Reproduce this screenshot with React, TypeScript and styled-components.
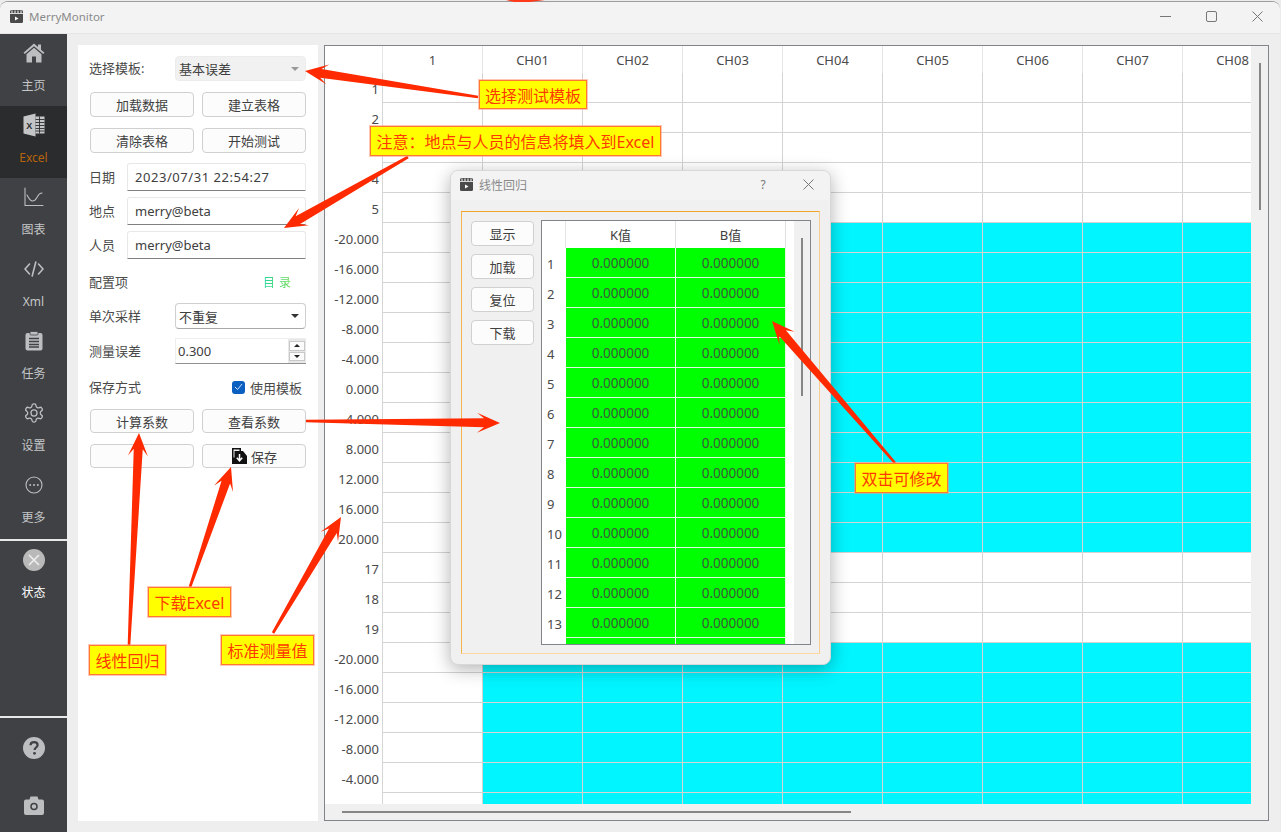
import React from "react";
import styled, { createGlobalStyle } from "styled-components";

const Global = createGlobalStyle`
  html, body { margin: 0; padding: 0; background: #ececec; overflow: hidden; }
  * { box-sizing: border-box; }
`;

const FONT = `"Noto Sans", "Noto Sans CJK SC", sans-serif`;

const Page = styled.div`
  position: relative; width: 1281px; height: 832px; overflow: hidden;
  font-family: ${FONT}; font-size: 13px; color: #404040; padding-top: 1px;
`;
const Win = styled.div`
  width: 1280px; height: 831px; background: #eeeeee; display: flex; flex-direction: column;
  border-top: 1px solid #9c9c9c; border-radius: 8px 8px 0 0; overflow: hidden;
`;
const TitleBar = styled.div`
  height: 32px; flex: none; background: #f3f3f3; border-bottom: 1px solid #e6e6e6;
  display: flex; align-items: center; padding: 0 0 2px 10px; color: #8a8a8a; font-size: 11.5px;
`;
const TitleText = styled.span` flex: 1; margin-left: 6px; `;
const WinBtn = styled.span<{ $w?: number }>`
  width: ${p => p.$w ?? 46}px; height: 28px; flex: none; display: flex; align-items: center; justify-content: center; color: #777;
`;
const Body = styled.div` flex: 1; display: flex; min-height: 0; `;
const Side = styled.nav`
  width: 67px; flex: none; background: #404144; display: flex; flex-direction: column;
`;
const SideItem = styled.div<{ $active?: boolean; $status?: boolean }>`
  height: 72px; flex: none; display: flex; flex-direction: column; align-items: center; justify-content: flex-start;
  padding-top: 8px; gap: 14px; font-size: 12px; line-height: 16px;
  background: ${p => (p.$active ? "#2b2c2e" : "transparent")};
  color: ${p => (p.$active ? "#b8640c" : p.$status ? "#ffffff" : "#c4c6c8")};
`;
const IconBox = styled.span`
  width: 24px; height: 22px; display: flex; align-items: center; justify-content: center; color: #bcbec0;
`;
const SideRule = styled.div<{ $top?: number }>`
  height: 2px; flex: none; background: #e8e8e8; margin-top: ${p => p.$top ?? 0}px;
`;
const Spacer = styled.div` flex: 1; `;
const SideIconOnly = styled.div<{ $h: number }>`
  height: ${p => p.$h}px; flex: none; display: flex; align-items: center; justify-content: center; color: #bcbec0;
`;
const Main = styled.div`
  flex: 1; display: flex; padding: 11px 12px 11px 11px; gap: 6px; min-width: 0;
`;
const Panel = styled.section`
  width: 240px; flex: none; background: #fff; padding: 11px 12px 0 11px; display: flex; flex-direction: column;
`;
const Row = styled.div<{ $top?: number; $h?: number }>`
  display: flex; align-items: center; justify-content: space-between; flex: none;
  height: ${p => p.$h ?? 25}px; margin-top: ${p => p.$top ?? 0}px;
`;
const BtnRow = styled(Row)`
  padding-left: 1px; gap: 8px;
`;
const Label = styled.span` white-space: nowrap; color: #4a4a4a; line-height: 1; `;
const Btn = styled.button<{ $w?: number; $h?: number }>`
  width: ${p => p.$w ?? 104}px; height: ${p => p.$h ?? 25}px; background: #fcfcfc;
  border: 1px solid #d0d0d0; border-radius: 4px; font: inherit; color: #404040; padding: 0;
  display: flex; align-items: center; justify-content: center; gap: 4px;
`;
const Combo = styled.div<{ $flat?: boolean }>`
  width: 131px; height: 100%; border-radius: 4px; display: flex; align-items: center; justify-content: space-between;
  padding: 0 4px 0 3px;
  background: ${p => (p.$flat ? "#f1f1f1" : "#fff")};
  border: 1px solid ${p => (p.$flat ? "#ececec" : "#cfcfcf")};
  ${p => (p.$flat ? "" : "border-bottom-color:#a8a8a8;")}
`;
const Caret = styled.span<{ $c: string }>`
  width: 0; height: 0; border-left: 4px solid transparent; border-right: 4px solid transparent;
  border-top: 4px solid ${p => p.$c}; margin-right: 2px;
`;
const Field = styled.div<{ $spaced?: boolean }>`
  width: 179px; height: 100%; background: #fff; border: 1px solid #e8e8e8; border-bottom: 1px solid #808080;
  border-radius: 3px 3px 0 0; display: flex; align-items: center; padding-left: 7px; font-size: 13px;
  letter-spacing: ${p => (p.$spaced ? ".55px" : "0")};
`;
const Spin = styled.div`
  width: 131px; height: 100%; background: #fff; border-bottom: 1px solid #909090; border-top: 1px solid #eee;
  border-left: 1px solid #eee; display: flex; align-items: center; justify-content: space-between; padding-left: 2px;
`;
const SpinArrows = styled.div`
  width: 18px; height: 100%; background: #e8e8e8; padding: 2px 1px 2px 1px; display: flex; flex-direction: column; gap: 1px;
`;
const SpinBtn = styled.span<{ $up?: boolean }>`
  flex: 1; background: #fbfbfb; border: 1px solid #c8c8c8; display: flex; align-items: center; justify-content: center;
  &::after {
    content: ""; width: 0; height: 0; border-left: 3px solid transparent; border-right: 3px solid transparent;
    ${p => (p.$up ? "border-bottom: 3px solid #222;" : "border-top: 3px solid #222;")}
  }
`;
const Catalog = styled.span`
  margin-right: 11px; font-size: 12px; letter-spacing: 4px;
  background: linear-gradient(90deg, #25d9a0, #6fd640); -webkit-background-clip: text; background-clip: text; color: transparent;
`;
const Check = styled.label`
  display: flex; align-items: center; gap: 5px; margin-right: 4px; color: #4a4a4a;
`;
const CheckBox = styled.span`
  width: 13px; height: 13px; background: #0a5fc0; border-radius: 3px; display: flex; align-items: center; justify-content: center;
`;
const TableFrame = styled.section`
  width: 945px; height: 776px; flex: none; border: 1px solid #80858c; background: #f0f0f0; position: relative;
  display: grid; grid-template-columns: 1fr 17px; grid-template-rows: 1fr 16px; overflow: hidden;
`;
const Viewport = styled.div` overflow: hidden; background: #fff; `;
const HeadRow = styled.div` display: flex; height: 27px; `;
const Corner = styled.div` width: 58px; flex: none; border-right: 1px solid #e6e6e6; `;
const HeadCell = styled.div`
  width: 100px; flex: none; border-right: 1px solid #e6e6e6; text-align: center; line-height: 28px; color: #4a4a4a;
  font-size: 13px; white-space: nowrap;
`;
const DataRow = styled.div` display: flex; height: 30px; `;
const RowHead = styled.div`
  width: 58px; flex: none; border-right: 1px solid #d6d6d6; text-align: right; padding-right: 3px; line-height: 33px;
  color: #4a4a4a; font-size: 13px;
`;
const Cell = styled.div<{ $cyan?: boolean }>`
  width: 100px; flex: none; border-right: 1px solid #d4d4d4; border-bottom: 1px solid #d4d4d4;
  background: ${p => (p.$cyan ? "#00f5ff" : "#fff")};
`;
const VThumb = styled.div`
  display: flex; justify-content: center; padding-top: 17px;
  &::after { content: ""; width: 2px; height: 147px; background: #868686; }
`;
const HThumb = styled.div`
  padding: 7px 0 0 17px;
  &::after { content: ""; display: block; width: 509px; height: 2px; background: #868686; }
`;
const Dialog = styled.section`
  position: absolute; left: 450px; top: 170px; width: 381px; height: 495px; background: #f0f0f0;
  border: 1px solid #d8d8d8; border-radius: 8px; box-shadow: 0 4px 18px rgba(0, 0, 0, .3);
  display: flex; flex-direction: column; overflow: hidden;
`;
const DialogTitle = styled.div`
  height: 29px; flex: none; background: #f3f3f3; display: flex; align-items: center; padding: 0 0 2px 9px;
  color: #8a8a8a; font-size: 12px;
`;
const DialogFrame = styled.div`
  flex: none; margin: 11px 10px 0 10px; width: 359px; height: 443px; padding: 9px 8px 8px 9px; display: flex; gap: 7px;
  border: 1px solid #f8cd90; border-top-color: #f0a428; border-left-color: #f3b450; border-bottom-color: #fbd9a0;
`;
const DialogBtns = styled.div` width: 63px; flex: none; display: flex; flex-direction: column; gap: 8px; `;
const MiniTable = styled.div`
  width: 270px; height: 425px; flex: none; border: 1px solid #80858c; background: #f0f0f0; display: flex; overflow: hidden; margin-top: -1px;
`;
const MiniBody = styled.div` width: 252px; flex: none; background: #fff; overflow: hidden; `;
const MiniHead = styled.div` display: flex; height: 27px; `;
const MiniCorner = styled.div` width: 24px; flex: none; border-right: 1px solid #e6e6e6; `;
const MiniHeadCell = styled.div`
  width: 110px; flex: none; border-right: 1px solid #e0e0e0; text-align: center; line-height: 29px; font-size: 13px;
`;
const MiniRow = styled.div` display: flex; height: 30px; `;
const MiniNum = styled.div`
  width: 24px; flex: none; padding-left: 5px; line-height: 33px; color: #4a4a4a;
`;
const GreenCell = styled.div`
  width: 110px; flex: none; background: #00ff00; border-right: 1px solid #e2f5e2; border-bottom: 1px solid #e2f5e2;
  text-align: center; line-height: 31px; font-size: 13.5px; color: #3c5a3c;
`;
const MiniScroll = styled.div`
  flex: 1; display: flex; justify-content: center; padding-top: 17px; padding-left: 0;
  &::after { content: ""; width: 2px; height: 158px; background: #868686; }
`;
const ArrowLayer = styled.svg` position: absolute; left: 0; top: 0; width: 1281px; height: 832px; pointer-events: none; `;
const Note = styled.div<{ $x: number; $y: number; $w: number; $h: number }>`
  position: absolute; left: ${p => p.$x}px; top: ${p => p.$y}px; width: ${p => p.$w}px; height: ${p => p.$h}px;
  background: #ffff00; border: 1px solid #ff7a30; outline: 1px solid rgba(255, 150, 120, .55);
  color: #ff3a00; font-size: 16px; display: flex; align-items: center; justify-content: center; white-space: nowrap;
`;

const stroke = { fill: "none", stroke: "currentColor", strokeWidth: 1.4, strokeLinecap: "round", strokeLinejoin: "round" } as const;

const Clapper = () => (
  <svg width="13" height="13" viewBox="0 0 13 13">
    <rect x="0" y="0" width="13" height="13" rx="1.5" fill="#4a4a4a" />
    <path d="M2 0.5v2.5M5 0.5v2.5M8 0.5v2.5M11 0.5v2.5" stroke="#fff" strokeWidth="1" />
    <path d="M0 3.5h13" stroke="#fff" strokeWidth=".8" />
    <path d="M5 6.5l3.5 2-3.5 2z" fill="#fff" />
  </svg>
);
const Home = () => (
  <svg width="22" height="20" viewBox="0 0 22 20" fill="currentColor">
    <path d="M11 0.5 0.5 9.7l1.3 1.4L11 3.2l9.2 7.9 1.3-1.4-3.5-3V1.5h-3v2.6z" />
    <path d="M11 4.8 3.5 11.2V19.500h5.5v-6h4v6h5.500v-8.300z" />
  </svg>
);
const ExcelIco = () => (
  <svg width="22" height="24" viewBox="0 0 22 24">
    <path d="M0.500 3.500 12.500 .500v23l-12-3z" fill="#c3c5c7" />
    <text x="3.200" y="15.500" fontSize="9" fontFamily="Liberation Sans" fontWeight="700" fill="#2b2c2e">X</text>
    <path d="M12.500 3.500h9v17h-9z" fill="#c3c5c7" />
    <path d="M12.500 6.500h9M12.500 9.500h9M12.500 12.500h9M12.500 15.500h9M12.500 18h9M16.500 3.500v17" stroke="#2b2c2e" strokeWidth=".9" />
  </svg>
);
const ChartIco = () => (
  <svg width="20" height="20" viewBox="0 0 20 20" {...stroke} strokeWidth={1.1}>
    <path d="M1 1v17.500h18" />
    <path d="M3 8c1.500 3 3 6 5.500 6 3 0 3.500-2 5-4.500 1-2 2.500-3.500 4.500-3.500" />
  </svg>
);
const CodeIco = () => (
  <svg width="20" height="18" viewBox="0 0 20 18" {...stroke} strokeWidth={1.6}>
    <path d="M5.500 4 1 9l4.500 5M14.500 4 19 9l-4.500 5M11.800 2 8.200 16" />
  </svg>
);
const TaskIco = () => (
  <svg width="18" height="20" viewBox="0 0 18 20">
    <rect x=".5" y="2" width="17" height="17.500" rx="2" fill="currentColor" />
    <rect x="5" y=".5" width="8" height="3.500" rx="1" fill="currentColor" stroke="#404144" strokeWidth=".8" />
    <path d="M4 7.500h10M4 10.500h10M4 13.500h10M4 16h10" stroke="#404144" strokeWidth="1.300" />
  </svg>
);
const GearIco = () => (
  <svg width="22" height="22" viewBox="0 0 24 24" {...stroke} strokeWidth={1.4}>
    <path d="M12.220 2h-.44a2 2 0 0 0-2 2v.18a2 2 0 0 1-1 1.730l-.43.250a2 2 0 0 1-2 0l-.15-.080a2 2 0 0 0-2.730.730l-.22.380a2 2 0 0 0 .730 2.730l.15.100a2 2 0 0 1 1 1.720v.510a2 2 0 0 1-1 1.740l-.15.090a2 2 0 0 0-.730 2.730l.22.380a2 2 0 0 0 2.730.730l.15-.080a2 2 0 0 1 2 0l.43.250a2 2 0 0 1 1 1.730V20a2 2 0 0 0 2 2h.44a2 2 0 0 0 2-2v-.18a2 2 0 0 1 1-1.730l.43-.250a2 2 0 0 1 2 0l.15.080a2 2 0 0 0 2.730-.730l.22-.390a2 2 0 0 0-.730-2.730l-.15-.080a2 2 0 0 1-1-1.740v-.5a2 2 0 0 1 1-1.740l.15-.090a2 2 0 0 0 .730-2.730l-.22-.380a2 2 0 0 0-2.730-.730l-.15.080a2 2 0 0 1-2 0l-.43-.250a2 2 0 0 1-1-1.730V4a2 2 0 0 0-2-2z" />
    <circle cx="12" cy="12" r="3.300" />
  </svg>
);
const MoreIco = () => (
  <svg width="18" height="18" viewBox="0 0 18 18">
    <circle cx="9" cy="9" r="8" fill="none" stroke="currentColor" strokeWidth="1.100" />
    <circle cx="5.200" cy="9" r="1" fill="currentColor" /><circle cx="9" cy="9" r="1" fill="currentColor" /><circle cx="12.800" cy="9" r="1" fill="currentColor" />
  </svg>
);
const XCircle = () => (
  <svg width="22" height="22" viewBox="0 0 22 22">
    <circle cx="11" cy="11" r="11" fill="#b9b9b9" />
    <path d="M6 6l10 10M16 6 6 16" stroke="#f0f0f0" strokeWidth="1.500" />
  </svg>
);
const HelpIco = () => (
  <svg width="22" height="22" viewBox="0 0 22 22">
    <circle cx="11" cy="11" r="11" fill="#bcbec0" />
    <path d="M7.500 8.300c0-2 1.500-3.200 3.600-3.200 2.100 0 3.500 1.200 3.500 2.900 0 2.600-3 2.400-3 5" fill="none" stroke="#404144" strokeWidth="2.200" />
    <circle cx="11.500" cy="16.300" r="1.400" fill="#404144" />
  </svg>
);
const CameraIco = () => (
  <svg width="20" height="19" viewBox="0 0 20 19">
    <path d="M2 3.500h3.500L6.500 .5h7l1 3H18a2 2 0 0 1 2 2V17a2 2 0 0 1-2 2H2a2 2 0 0 1-2-2V5.500a2 2 0 0 1 2-2z" fill="#bcbec0" />
    <circle cx="10" cy="10.500" r="3" fill="none" stroke="#404144" strokeWidth="1.500" />
  </svg>
);
const SaveIco = () => (
  <svg width="16" height="17" viewBox="0 0 16 17">
    <path d="M1 0h9v3h2l4 5v8H1z" fill="#111" />
    <path d="M3 1.500h5.500v1.500H3z" fill="#eee" />
    <path d="M3 1.500v8" stroke="#eee" strokeWidth="1" />
    <path d="M8.500 6v6M5.800 9.800l2.700 3 2.700-3" fill="none" stroke="#fff" strokeWidth="1.500" />
  </svg>
);
const Tick = () => (
  <svg width="9" height="8" viewBox="0 0 9 8"><path d="M1 4l2.500 2.500L8 1" fill="none" stroke="#cfe2ff" strokeWidth="1" /></svg>
);

type P = [number, number];
function arrowPoints(tail: P, tip: P): string {
  const dx = tip[0] - tail[0], dy = tip[1] - tail[1];
  const l = Math.hypot(dx, dy);
  const d: P = [dx / l, dy / l];
  const n: P = [-d[1], d[0]];
  const at = (back: number, side: number) => `${tip[0] - d[0] * back + n[0] * side},${tip[1] - d[1] * back + n[1] * side}`;
  return [at(l, 1.3), at(16, 4.5), at(23, 10), at(0, 0), at(23, -10), at(16, -4.5), at(l, -1.3)].join(" ");
}

const arrows: [P, P][] = [
  [[478, 97], [305, 71]],
  [[408, 157], [284, 228]],
  [[306, 421], [500, 423]],
  [[895, 463], [772, 321]],
  [[129, 645], [139, 433]],
  [[190, 587], [231, 467]],
  [[273, 633], [341, 517]],
];

const notes = [
  { x: 479, y: 80, w: 108, h: 29, t: "选择测试模板" },
  { x: 370, y: 126, w: 291, h: 30, t: "注意：地点与人员的信息将填入到Excel" },
  { x: 855, y: 463, w: 93, h: 30, t: "双击可修改" },
  { x: 148, y: 587, w: 83, h: 30, t: "下载Excel" },
  { x: 89, y: 645, w: 77, h: 30, t: "线性回归" },
  { x: 221, y: 635, w: 93, h: 30, t: "标准测量值" },
];

const cols = ["1", "CH01", "CH02", "CH03", "CH04", "CH05", "CH06", "CH07", "CH08"];
const std = ["-20.000", "-16.000", "-12.000", "-8.000", "-4.000", "0.000", "4.000", "8.000", "12.000", "16.000", "20.000"];
const rows: { l: string; c: boolean }[] = [
  ...["1", "2", "3", "4", "5"].map(l => ({ l, c: false })),
  ...std.map(l => ({ l, c: true })),
  ...["17", "18", "19"].map(l => ({ l, c: false })),
  ...std.slice(0, 5).map(l => ({ l, c: true })),
  { l: "", c: true },
];
const navItems = [
  { l: "主页", i: <Home /> },
  { l: "Excel", i: <ExcelIco />, a: true },
  { l: "图表", i: <ChartIco /> },
  { l: "Xml", i: <CodeIco /> },
  { l: "任务", i: <TaskIco /> },
  { l: "设置", i: <GearIco /> },
  { l: "更多", i: <MoreIco /> },
];

export default function App() {
  return (
    <Page>
      <Global />
      <Win>
        <TitleBar>
          <Clapper />
          <TitleText>MerryMonitor</TitleText>
          <WinBtn><svg width="11" height="11" viewBox="0 0 11 11"><path d="M0 5.500h11" stroke="currentColor" /></svg></WinBtn>
          <WinBtn><svg width="11" height="11" viewBox="0 0 11 11"><rect x=".5" y=".5" width="10" height="10" rx="1.500" fill="none" stroke="currentColor" /></svg></WinBtn>
          <WinBtn><svg width="11" height="11" viewBox="0 0 11 11"><path d="M.5.500l10 10M10.500.500l-10 10" stroke="currentColor" /></svg></WinBtn>
        </TitleBar>
        <Body>
          <Side>
            {navItems.map(n => (
              <SideItem key={n.l} $active={n.a}>
                <IconBox>{n.i}</IconBox>
                {n.l}
              </SideItem>
            ))}
            <SideRule $top={1} />
            <SideItem $status><IconBox><XCircle /></IconBox>状态</SideItem>
            <Spacer />
            <SideRule />
            <SideIconOnly $h={60}><HelpIco /></SideIconOnly>
            <SideIconOnly $h={54}><CameraIco /></SideIconOnly>
          </Side>
          <Main>
            <Panel>
              <Row><Label>选择模板:</Label><Combo $flat>基本误差<Caret $c="#999" /></Combo></Row>
              <BtnRow $top={11}><Btn>加载数据</Btn><Btn>建立表格</Btn></BtnRow>
              <BtnRow $top={11}><Btn>清除表格</Btn><Btn>开始测试</Btn></BtnRow>
              <Row $top={10} $h={28}><Label>日期</Label><Field $spaced>2023/07/31 22:54:27</Field></Row>
              <Row $top={6} $h={28}><Label>地点</Label><Field>merry@beta</Field></Row>
              <Row $top={6} $h={28}><Label>人员</Label><Field>merry@beta</Field></Row>
              <Row $top={11} $h={24}><Label>配置项</Label><Catalog>目录</Catalog></Row>
              <Row $top={9} $h={26}><Label>单次采样</Label><Combo>不重复<Caret $c="#333" /></Combo></Row>
              <Row $top={9} $h={26}>
                <Label>测量误差</Label>
                <Spin>0.300<SpinArrows><SpinBtn $up /><SpinBtn /></SpinArrows></Spin>
              </Row>
              <Row $top={11} $h={24}>
                <Label>保存方式</Label>
                <Check><CheckBox><Tick /></CheckBox>使用模板</Check>
              </Row>
              <BtnRow $top={10} $h={24}><Btn $h={24}>计算系数</Btn><Btn $h={24}>查看系数</Btn></BtnRow>
              <BtnRow $top={11} $h={24}><Btn $h={24} /><Btn $h={24}><SaveIco />保存</Btn></BtnRow>
            </Panel>
            <TableFrame>
              <Viewport>
                <HeadRow>
                  <Corner />
                  {cols.map(c => <HeadCell key={c}>{c}</HeadCell>)}
                </HeadRow>
                {rows.map((r, i) => (
                  <DataRow key={i}>
                    <RowHead>{r.l}</RowHead>
                    {cols.map((c, j) => <Cell key={c} $cyan={r.c && j > 0} />)}
                  </DataRow>
                ))}
              </Viewport>
              <VThumb />
              <HThumb />
            </TableFrame>
          </Main>
        </Body>
      </Win>
      <Dialog>
        <DialogTitle>
          <Clapper />
          <TitleText>线性回归</TitleText>
          <WinBtn>?</WinBtn>
          <WinBtn $w={44}><svg width="11" height="11" viewBox="0 0 11 11"><path d="M.5.500l10 10M10.500.500l-10 10" stroke="currentColor" /></svg></WinBtn>
        </DialogTitle>
        <DialogFrame>
          <DialogBtns>
            {["显示", "加载", "复位", "下载"].map(t => <Btn key={t} $w={63}>{t}</Btn>)}
          </DialogBtns>
          <MiniTable>
            <MiniBody>
              <MiniHead>
                <MiniCorner />
                <MiniHeadCell>K值</MiniHeadCell>
                <MiniHeadCell>B值</MiniHeadCell>
              </MiniHead>
              {Array.from({ length: 14 }, (_, i) => (
                <MiniRow key={i}>
                  <MiniNum>{i < 13 ? i + 1 : ""}</MiniNum>
                  <GreenCell>{i < 13 ? "0.000000" : ""}</GreenCell>
                  <GreenCell>{i < 13 ? "0.000000" : ""}</GreenCell>
                </MiniRow>
              ))}
            </MiniBody>
            <MiniScroll />
          </MiniTable>
        </DialogFrame>
      </Dialog>
      <ArrowLayer viewBox="0 0 1281 832">
        <polygon points="506,0 545,0 530,2 514,2" fill="#ff3a1a" />
        {arrows.map((a, i) => <polygon key={i} points={arrowPoints(a[0], a[1])} fill="#ff2a00" />)}
      </ArrowLayer>
      {notes.map(n => <Note key={n.t} $x={n.x} $y={n.y} $w={n.w} $h={n.h}>{n.t}</Note>)}
    </Page>
  );
}
